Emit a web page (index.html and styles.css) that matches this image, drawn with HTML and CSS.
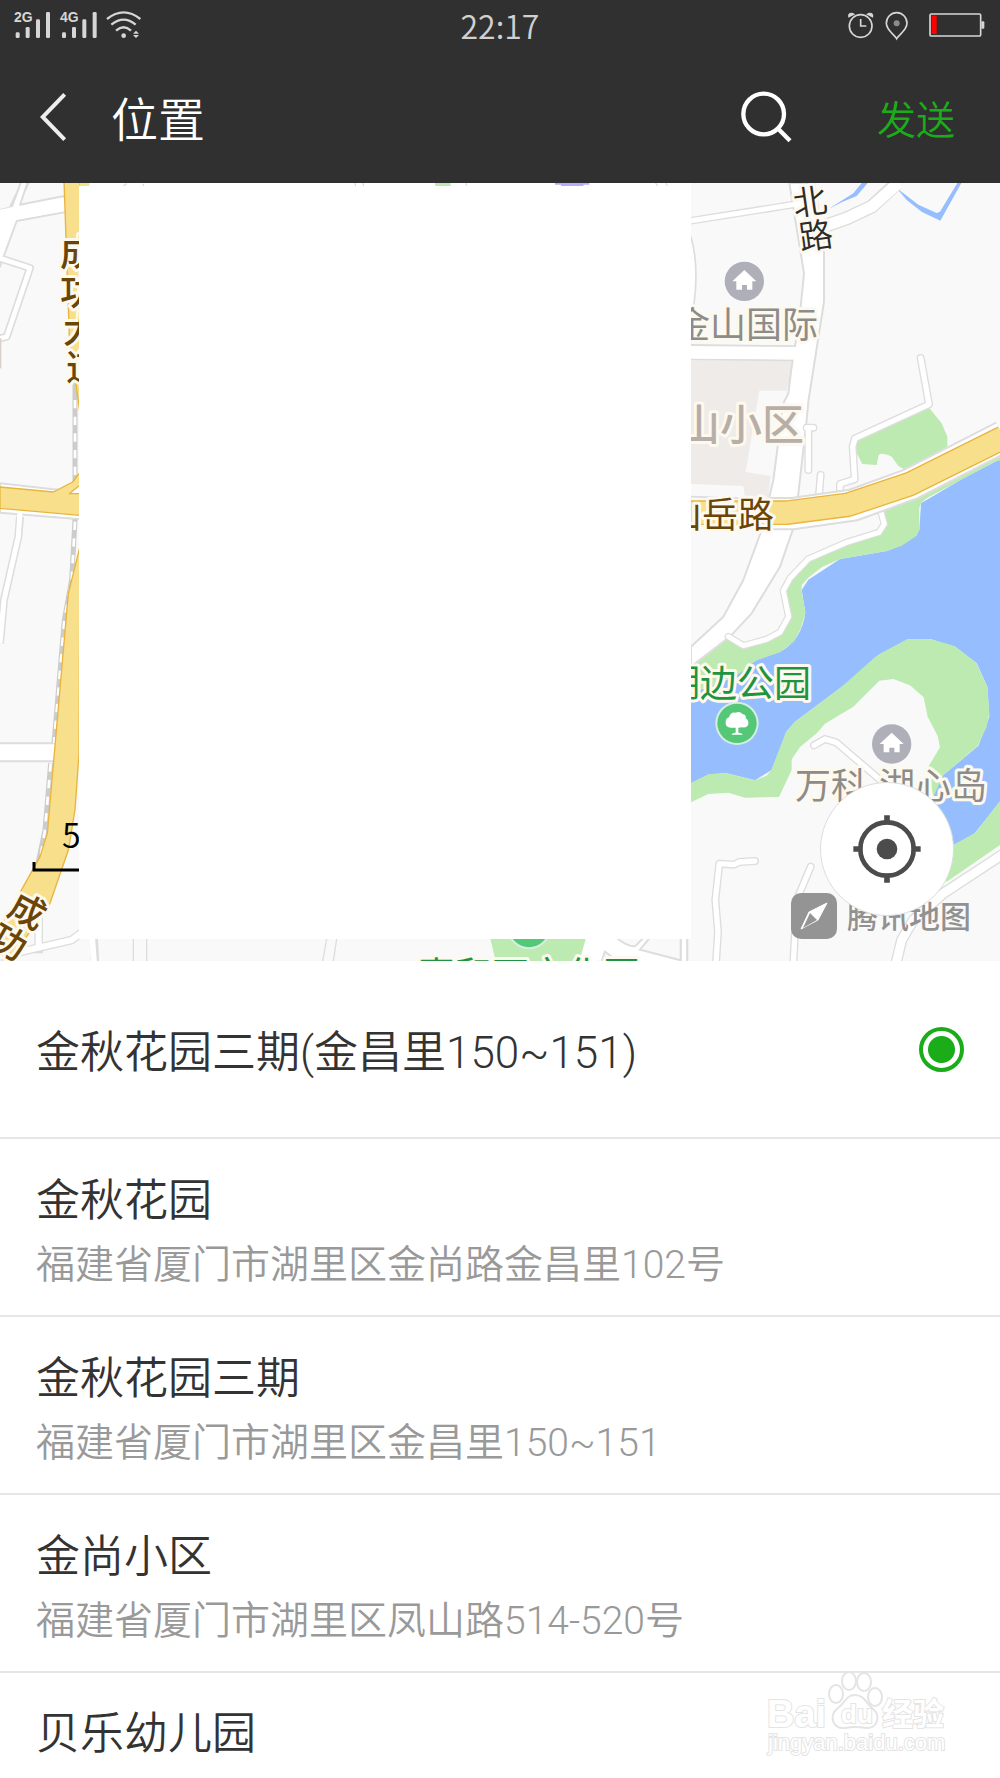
FILE: index.html
```html
<!DOCTYPE html>
<html lang="zh-CN">
<head>
<meta charset="utf-8">
<meta name="viewport" content="width=device-width, initial-scale=1">
<title>位置</title>
<link rel="stylesheet" href="styles.css">
</head>
<body>
<header class="top">
  <div class="status">
    <svg class="status-signal" viewBox="0 0 150 50" aria-hidden="true">
      <svg viewBox="0 0 450 150" width="150" height="50">
        <g fill="#d6d6d6">
          <rect x="47" y="97" width="12" height="17" rx="4"/><rect x="77" y="81" width="12" height="33" rx="4"/><rect x="108" y="58" width="12" height="56" rx="4"/><rect x="138" y="36" width="12" height="78" rx="4"/>
          <rect x="186" y="97" width="12" height="17" rx="4"/><rect x="216" y="81" width="12" height="33" rx="4"/><rect x="247" y="58" width="12" height="56" rx="4"/><rect x="278" y="36" width="12" height="78" rx="4"/>
          <circle cx="371" cy="107" r="7"/>
          <path d="M399 101L408 92L417 101ZM399 105L408 114L417 105Z"/>
        </g>
        <g fill="none" stroke="#d6d6d6" stroke-width="7">
          <path d="M321 57Q371 17 421 57"/><path d="M334 74Q371 44 407 74"/><path d="M348 92Q371 72 393 92"/>
        </g>
      </svg>
      <text class="net" x="14" y="22">2G</text>
      <text class="net" x="60" y="22">4G</text>
    </svg>
    <time class="clock">22:17</time>
    <svg class="status-power" viewBox="0 0 456 150" aria-hidden="true">
      <g fill="none" stroke="#d6d6d6" stroke-width="5">
        <circle cx="83" cy="78" r="34"/><path d="M83 57V78H100"/>
        <path d="M191 116C184 103 160 91 160 70A31 32 0 0 1 222 70C222 91 198 103 191 116Z"/>
        <rect x="291" y="42" width="152" height="66" rx="4"/>
      </g>
      <g fill="#d6d6d6"><path d="M46 53Q42 37 58 38L67 43ZM120 53Q124 37 108 38L99 43Z"/><rect x="445" y="64" width="9" height="22" rx="3"/></g>
      <circle cx="191" cy="70" r="9" fill="#8c8c8c"/>
      <rect x="296" y="47" width="15" height="55" fill="#f00"/>
    </svg>
  </div>
  <div class="bar">
    <button class="icon-button" type="button" aria-label="返回">
      <svg class="back-icon" viewBox="0 0 84 150"><path d="M74 7L8 75L74 143" fill="none" stroke="#eee" stroke-width="12"/></svg>
    </button>
    <h1 class="title">位置</h1>
    <button class="icon-button" type="button" aria-label="搜索">
      <svg class="search-icon" viewBox="0 0 156 156"><g fill="none" stroke="#fff"><circle cx="68" cy="69" r="61" stroke-width="13"/><path d="M110 112L147 149" stroke-width="13"/></g></svg>
    </button>
    <button class="send" type="button">发送</button>
  </div>
</header>
<main>
  <section class="map" aria-label="地图">
    <svg class="map-canvas" viewBox="0 0 1000 778">
      <defs>
        <g id="house"><circle r="59" fill="#afafb9"/><path d="M0 -34L36 0H24V25H8V11H-7V25H-24V0H-36Z" fill="#fff"/></g>
        <g id="tree"><circle r="65" fill="#d4efe0"/><circle r="59" fill="#55c878"/><path d="M-20 13Q-36 11 -34 -4Q-34 -15 -24 -18Q-20 -34 -5 -32Q10 -38 16 -28Q29 -26 26 -15Q36 -9 34 2Q32 14 16 12L4 13V28Q16 29 17 34H-17Q-14 28 -4 28V13Z" fill="#fff"/></g>
      </defs>
      <svg viewBox="0 0 3000 2334" width="1000" height="778">
        <rect width="3000" height="2334" fill="#f9f9f9"/>
        <g transform="translate(2040 -9)" stroke-linejoin="round">
          <path d="M960 838L850 895L723 970L718 1050Q700 1085 620 1113L480 1137L385 1199L365 1230L376 1298Q365 1380 300 1415L230 1440L140 1500L33 1540V1810L90 1783L140 1780L225 1801L275 1770L320 1654L345 1625L500 1510L600 1422L685 1377H750L825 1400L890 1450L922 1520L928 1610L895 1697L790 1785L760 1840L810 2000L880 1965L960 1865Z" fill="#96beff"/>
          <g fill="#bceab0">
            <path d="M960 815L700 935L600 985L610 1030L590 1065L390 1135L310 1220L326 1310L300 1360L190 1400L140 1370L33 1465V1531L80 1525L180 1480L230 1440L300 1417L343 1383L363 1345L376 1300L365 1230V1215L385 1193L425 1162L480 1137L620 1113L665 1097L710 1067L718 1050V985L723 970L740 955L950 842H960Z"/>
            <path d="M33 1809L85 1783L135 1779L225 1801L260 1787L274 1770L318 1656L345 1625L480 1525L590 1427L683 1377H750L825 1399L888 1448L922 1520L928 1600L920 1640L893 1697L790 1785L760 1850L742 1765L780 1702L773 1668L743 1610L731 1552L690 1516L640 1497L598 1502L520 1580L435 1631L410 1660L360 1701L335 1738V1770L297 1851L195 1853L145 1838L85 1842L33 1867Z"/>
            <path d="M960 1862L888 1957L815 1998L770 2060L800 2105L960 1995Z"/>
            <path d="M748 684L530 775L528 815L547 852L590 855L596 825Q605 816 635 830L655 858L672 868L802 800V770L785 730Z"/>
          </g>
          <path d="M33 539H343L320 632H238L197 876L272 888L265 950H195L190 918L33 912Z" fill="#efebe8"/>
          <path d="M444 88L520 40L545 9H563L530 48L485 67ZM650 24L715 74L770 99L780 95L832 9H844L781 122L726 96L680 60Z" fill="#96beff"/>
          <path d="M33 122L345 73" fill="none" stroke="#ddd" stroke-width="23"/>
          <path d="M33 170Q55 250 40 390H33Z" fill="#fff"/>
          <path d="M33 170Q58 260 41 380M33 950L270 957" fill="none" stroke="#ddd" stroke-width="5"/>
          <path d="M33 492V540L350 544V496Z" fill="#ddd"/>
          <path d="M440 136L500 115L575 80L650 10" fill="none" stroke="#ddd" stroke-width="42"/>
          <path d="M440 136L500 115L575 80L655 9" fill="none" stroke="#fff" stroke-width="34"/>
          <path d="M328 9L372 280L358 420L335 560L325 640L310 670L280 900L245 1050L190 1200L130 1310L33 1400V1460L150 1370L215 1300L300 1160L345 1030L380 720L385 665L432 365V180L402 9Z" fill="#fff" stroke="#ddd" stroke-width="6"/>
          <path d="M33 122L345 73" stroke="#fff" stroke-width="15"/><path d="M33 517L352 520" stroke="#fff" stroke-width="38"/>
          <g fill="none" stroke-linecap="round">
            <path d="M722 534L747 673L525 775L518 800L524 898L480 912V945M422 885L417 945M385 745V870M400 743H380M240 755H250" stroke="#ddd" stroke-width="24"/>
            <path d="M722 534L747 673L525 775L518 800L524 898L480 912V945M422 885L417 945M385 745V870M400 743H380" stroke="#fff" stroke-width="16"/>
            <path d="M600 985L613 1032L597 1057L500 1087L385 1137L330 1195L310 1232L326 1310L300 1357L260 1378L190 1397L145 1370" stroke="#ddd" stroke-width="22"/>
            <path d="M600 985L613 1032L597 1057L500 1087L385 1137L330 1195L310 1232L326 1310L300 1357L260 1378L190 1397L145 1370" stroke="#fff" stroke-width="15"/>
          </g>
          <path d="M260 1001H335L520 975L690 913L970 770" fill="none" stroke="#ddd" stroke-width="100"/>
          <path d="M260 1001H335L520 975L690 913L970 770" fill="none" stroke="#fff" stroke-width="88"/>
          <path d="M33 998H320L505 974L690 912L970 773" fill="none" stroke="#e9b53e" stroke-width="74"/>
          <path d="M33 998H320L505 974L690 912L970 773" fill="none" stroke="#f7df8c" stroke-width="66"/>
          <g fill="none" stroke="#ddd" stroke-width="24" stroke-linecap="round">
            <path d="M402 1696L435 1677L470 1688L640 1834M225 2043L178 2046L162 2054L118 2051L106 2160L114 2255L108 2350M392 2060L350 2160L340 2350"/>
            <path d="M970 2022L790 2140L700 2220L665 2280L648 2350" stroke-width="34"/>
            <path d="M12 2270V2360" stroke-width="22"/>
          </g>
          <g fill="none" stroke="#fff" stroke-width="16" stroke-linecap="round">
            <path d="M402 1696L435 1677L470 1688L640 1834M225 2043L178 2046L162 2054L118 2051L106 2160L114 2255L108 2350M392 2060L350 2160L340 2350"/>
            <path d="M970 2022L790 2140L700 2220L665 2280L648 2350" stroke-width="26"/>
            <path d="M12 2270V2360" stroke-width="14"/>
          </g>
          <use href="#house" x="193" y="304"/><use href="#house" x="635" y="1692"/><use href="#tree" x="171" y="1630"/>
        </g>
        <g transform="translate(0 -9)" stroke-linejoin="round">
          <path d="M80 0L40 80L0 190M0 235L90 264L20 470L0 475" fill="none" stroke="#ddd" stroke-width="24"/>
          <path d="M0 90L35 82L65 0H85L60 74L192 48V97L50 123L0 260Z" fill="#fff" stroke="#ddd" stroke-width="6"/>
          <path d="M0 235L90 264L20 470L0 475" fill="none" stroke="#fff" stroke-width="14"/>
          <path d="M-4 90L50 78L72 4H80L55 80L198 52V93L48 119L-4 250Z" fill="#fff"/>
          <rect x="0" y="475" width="4" height="90" fill="#d8d0ca"/>
          <path d="M0 910L180 930L240 925V1018L0 998Z" fill="#fff" stroke="#ddd" stroke-width="6"/>
          <path d="M60 1010L55 1070L12 1260L0 1390" fill="none" stroke="#ddd" stroke-width="24"/>
          <path d="M60 997L55 1070L12 1260L0 1390" fill="none" stroke="#fff" stroke-width="15"/>
          <path d="M0 1717H170" stroke="#ddd" stroke-width="60"/><path d="M0 1717H170" stroke="#fff" stroke-width="48"/>
          <path d="M225 600V905M225 1018L215 1200L193 1320L162 1690M152 1750L135 1950L110 2070" fill="none" stroke="#ccc" stroke-width="15"/>
          <path d="M225 660V905M225 1025L215 1200L193 1320L162 1690M152 1750L135 1950L115 2070" fill="none" stroke="#fff" stroke-width="8" stroke-dasharray="25 25"/>
          <path d="M116 2200V2320M0 2330L215 2280L290 2225M280 2260L285 2350" fill="none" stroke="#ddd" stroke-width="26"/>
          <path d="M116 2200V2310M0 2330L215 2280L290 2225M275 2260L282 2350" fill="none" stroke="#fff" stroke-width="18"/>
          <path d="M192 0L208 470L240 700V0ZM0 921L160 936L218 906L240 877V1006L0 985ZM240 1100L205 1240L142 1960L120 2030L20 2210L-40 2300L30 2340L150 2170L205 2010L225 1890L237 1720Z" fill="#f7df8c" stroke="#e9b53e" stroke-width="4"/>
          <path d="M208 941L240 915V941Z" fill="#fff" stroke="#e9b53e" stroke-width="4"/>
        </g>
        <path d="M270 0H2073V9H270Z" fill="#fff"/>
        <path d="M239 0H268V9H239Z" fill="#f7df8c"/><path d="M1305 0H1352V9H1305Z" fill="#bceab0"/><path d="M1665 0H1768V5H1750V9H1683V5H1665Z" fill="#b7aaff"/>
        <path d="M1066 0V9M1090 0V9M1399 0V9M1967 0L1972 9M1998 0L2002 9M380 2L370 9M430 2V9" stroke="#ddd" stroke-width="4"/>
        <path d="M400 2268V2334M440 2268V2334M1010 2268L1000 2334M980 2268L968 2334" stroke="#ddd" stroke-width="4"/>
        <path d="M1467 2250L1487 2334H1738L1762 2250Z" fill="#bceab0"/><use href="#tree" x="1587" y="2234"/>
        <path d="M1740 2334L1765 2250H2035V2334Z" fill="#fff"/>
        <path d="M1850 2264Q1880 2290 1905 2290L1935 2260M1950 2264L1920 2300L2042 2332V2264M2062 2264V2334M1805 2334L1815 2306L1840 2325" stroke="#ddd" stroke-width="6" fill="#f9f9f9"/>
      </svg>
      <g class="label road">
        <text x="60" y="83">成</text><text x="60" y="122">功</text><text x="63" y="160">大</text><text x="66" y="198">道</text>
        <text transform="translate(28 727) rotate(28)" x="-18" y="14">成</text><text transform="translate(9 758) rotate(30)" x="-18" y="14">功</text>
      </g>
      <text class="label street" x="666" y="345">山岳路</text>
      <g class="label lane"><text transform="translate(810 19) rotate(-8)" x="-17" y="12">北</text><text transform="translate(816 53) rotate(-8)" x="-17" y="12">路</text></g>
      <text class="label place" x="674" y="155">金山国际</text>
      <text class="label district" x="678" y="257">山小区</text>
      <text class="label park" x="663" y="514">湖边公园</text>
      <text class="label park" x="418" y="806">惠和石文化园</text>
      <text class="label place" x="795" y="616">万科</text><text class="label place" x="879" y="616">湖心岛</text>
      <path d="M34 679V687H90" fill="none" stroke="#000" stroke-width="3"/>
      <text class="scale" x="62" y="665">5</text>
      <rect x="791" y="710" width="46" height="46" rx="10" fill="#949494"/>
      <path d="M827 720L809 729L801 746L818 737Z" fill="#fff" stroke="#fff"/><path d="M810 730L817 737L803 745Z" fill="#949494"/>
      <text class="brand" x="847" y="745">腾讯地图</text>
      <rect x="79" y="3" width="612" height="753" fill="#fff"/>
    </svg>
    <button class="locate" type="button" aria-label="定位">
      <svg class="locate-icon" viewBox="0 0 204 204"><g fill="none" stroke="#4c4c4c"><circle cx="102" cy="102" r="80" stroke-width="14"/><path d="M102 1V28M102 176V203M1 102H28M176 102H203" stroke-width="17"/></g><circle cx="102" cy="102" r="31" fill="#4c4c4c"/></svg>
    </button>
  </section>
  <form class="places">
    <label class="row"><span class="info"><span class="name">金秋花园三期(金昌里150~151)</span></span><input class="pick" type="radio" name="place" checked></label>
    <label class="row"><span class="info"><span class="name">金秋花园</span><span class="address">福建省厦门市湖里区金尚路金昌里102号</span></span><input class="pick" type="radio" name="place"></label>
    <label class="row"><span class="info"><span class="name">金秋花园三期</span><span class="address">福建省厦门市湖里区金昌里150~151</span></span><input class="pick" type="radio" name="place"></label>
    <label class="row"><span class="info"><span class="name">金尚小区</span><span class="address">福建省厦门市湖里区凤山路514-520号</span></span><input class="pick" type="radio" name="place"></label>
    <label class="row last"><span class="info"><span class="name">贝乐幼儿园</span></span><input class="pick" type="radio" name="place"></label>
    <svg class="watermark" viewBox="0 0 184 92" aria-hidden="true">
      <g fill="#fff" stroke="#e4e4e4" stroke-width="2">
        <text class="wm-logo" x="1" y="57">Bai</text>
        <ellipse cx="70" cy="24" rx="7" ry="9"/><ellipse cx="83" cy="11" rx="7" ry="9"/><ellipse cx="98" cy="12" rx="7" ry="9"/><ellipse cx="109" cy="27" rx="7" ry="9"/>
        <path d="M89 25C98 25 100 33 106 38C116 46 111 59 100 58Q89 56 79 58C67 59 62 46 72 38C79 33 80 25 89 25Z"/>
        <text class="wm-du" x="75" y="53">du</text>
        <text class="wm-cn" x="116" y="55">经验</text>
        <text class="wm-url" x="2" y="80">jingyan.baidu.com</text>
      </g>
    </svg>
  </form>
</main>
</body>
</html>
```
FILE: styles.css
```css
* { box-sizing: border-box; }
body {
  margin: 0;
  background: #fff;
  color: #333;
  font-family: "Noto Sans CJK SC", sans-serif;
  font-weight: 350;
}
button { padding: 0; border: 0; background: none; font: inherit; cursor: pointer; }
svg { display: block; }

.top { background: #303030; }
.status {
  display: grid;
  grid-template-columns: 1fr auto 1fr;
  height: 50px;
}
.status-signal { width: 150px; height: 50px; }
.status-power { justify-self: end; width: 152px; height: 50px; margin-right: 15px; }
.net { font: bold 14px "Liberation Sans", sans-serif; fill: #d6d6d6; }
.clock {
  font-size: 32px;
  line-height: 50px;
  color: #d0d0d0;
}
.bar {
  display: flex;
  align-items: center;
  height: 133px;
  padding: 0 45px 0 40px;
}
.back-icon { width: 28px; height: 50px; }
.search-icon { width: 52px; height: 52px; }
.title {
  flex: 1;
  margin: 0 0 0 43px;
  color: #fff;
  font-size: 47px;
  line-height: 60px;
  font-weight: 350;
}
.send { margin-left: 84px; color: #1aad19; font-size: 39px; line-height: 60px; }

.map { position: relative; overflow: hidden; }
.map-canvas { width: 100%; height: auto; }
.label { font-size: 36px; stroke: #fdf9ee; stroke-width: 6px; stroke-linejoin: round; paint-order: stroke; }
.road { fill: #6b4508; font-weight: 500; }
.street { fill: #6b4508; font-weight: 400; }
.lane { fill: #2b2b2b; font-size: 34px; }
.place { fill: #8c8c8a; font-weight: 400; }
.district { fill: #b8aea9; font-size: 42px; font-weight: 500; }
.park { fill: #1f9440; font-size: 37px; font-weight: 400; }
.scale { fill: #000; font-size: 34px; }
.brand { fill: #919191; font-size: 31px; font-weight: 500; }
.locate {
  position: absolute;
  right: 46px;
  bottom: 45px;
  display: grid;
  place-items: center;
  width: 134px;
  height: 134px;
  border: 1px solid #ddd;
  border-radius: 50%;
  background: #fff;
}
.locate-icon { width: 68px; height: 68px; }

.places {
  position: relative;
  overflow: hidden;
  font-family: Roboto, "Noto Sans CJK SC", sans-serif;
}
.row {
  display: flex;
  align-items: center;
  justify-content: space-between;
  height: 178px;
  padding: 0 36px;
  border-bottom: 2px solid #e6e6e6;
}
.last { height: 105px; padding-top: 8px; border-bottom: 0; }
.info { display: grid; gap: 8px; padding-top: 8px; }
.name { font-size: 44px; line-height: 60px; }
.address { color: #999; font-size: 39px; line-height: 52px; }
.pick {
  appearance: none;
  width: 45px;
  height: 45px;
  margin: 0;
  border: 4px solid transparent;
  border-radius: 50%;
}
.pick:checked {
  border-color: #1aad19;
  background: radial-gradient(circle, #1aad19 13px, transparent 14px);
}
.watermark { position: absolute; right: 50px; bottom: 16px; width: 184px; height: 92px; }
.wm-logo { font: bold 38px "Liberation Sans", sans-serif; }
.wm-du { font: bold 26px "Liberation Sans", sans-serif; }
.wm-cn { font: bold 31px "Noto Sans CJK SC", sans-serif; }
.wm-url { font: 22px "Liberation Sans", sans-serif; }
.wm-logo, .wm-du, .wm-cn, .wm-url { paint-order: stroke; stroke-width: 2px; }
```
